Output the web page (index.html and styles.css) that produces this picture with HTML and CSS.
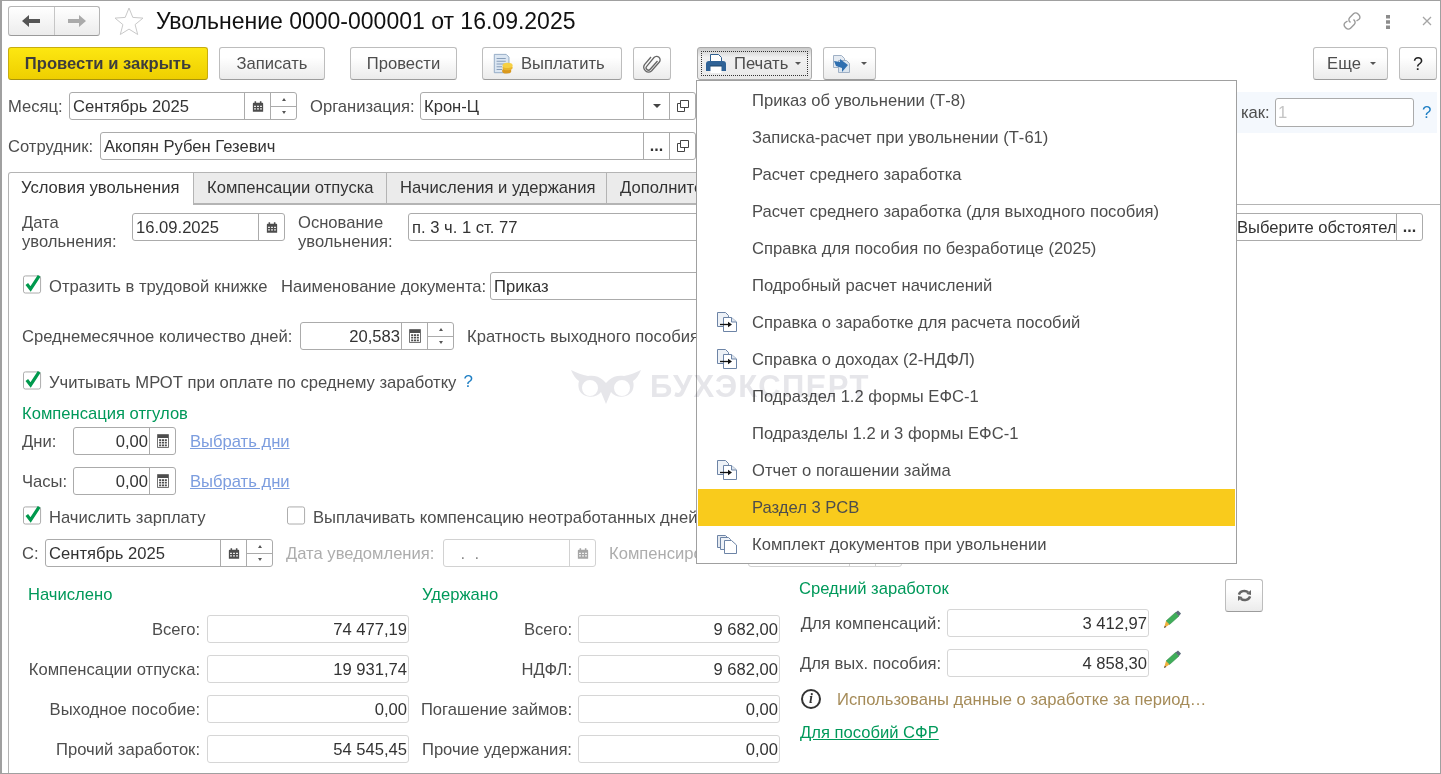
FILE: index.html
```html
<!DOCTYPE html>
<html lang="ru">
<head>
<meta charset="utf-8">
<title>Увольнение</title>
<link rel="stylesheet" href="styles.css">
</head>
<body>
<svg class="defs" width="0" height="0" aria-hidden="true">
  <symbol id="cal" viewBox="0 0 14 14">
    <path d="M1 3.500a1 1 0 0 1 1-1h10a1 1 0 0 1 1 1V13H1z" fill="#4d4d4d"/>
    <path d="M3 .8h1.800v3H3zM9.200.8H11v3H9.200z" fill="#4d4d4d"/>
    <path d="M2.500 6h2v1.600h-2zM6 6h2v1.600H6zM9.500 6h2v1.600h-2zM2.500 9h2v1.600h-2zM6 9h2v1.600H6zM9.500 9h2v1.600h-2z" fill="#fff"/>
  </symbol>
  <symbol id="calc" viewBox="0 0 14 16">
    <path d="M.5.500h13v15H.5z" fill="#fff" stroke="#4d4d4d"/>
    <path d="M1 1h12v3.500H1z" fill="#4d4d4d"/>
    <path d="M2.500 6h2.400v2H2.500zM5.800 6h2.400v2H5.800zM9.100 6h2.400v2H9.100zM2.500 9h2.400v2H2.500zM5.800 9h2.400v2H5.800zM9.100 9h2.400v2H9.100zM2.500 12h2.400v2H2.500zM5.800 12h2.400v2H5.800zM9.100 12h2.400v2H9.100z" fill="#4d4d4d"/>
  </symbol>
  <symbol id="docarrow" viewBox="0 0 20 20">
    <path d="M.5.500h8l3 3v11H.5z" fill="#eef2f7" stroke="#6d84a6"/>
    <path d="M6.500 5.500h8l5 4.500v9.500h-13z" fill="#fff" stroke="#6d84a6"/>
    <path d="M14.500 5.500V10h5" fill="#dfe6ef" stroke="#6d84a6"/>
    <path d="M3 12.500h10" stroke="#111" stroke-width="1.300" fill="none"/>
    <path d="M11 9.800l4 2.700-4 2.700z" fill="#111"/>
  </symbol>
  <symbol id="kit" viewBox="0 0 20 20">
    <path d="M.500 1.500h8l2 2v10H.5z" fill="#e4e9f0" stroke="#6d84a6"/>
    <path d="M3.500 3.500h8l2 2v10h-10z" fill="#eef2f7" stroke="#6d84a6"/>
    <path d="M7.500 6.500h7l5 4.500v8.500h-12z" fill="#fff" stroke="#6d84a6"/>
  </symbol>
  <symbol id="pencil" viewBox="0 0 17 18">
    <path d="M11.500 2.500l3.500 3.500L5.500 14.500 2 11z" fill="#3fae5a" stroke="#2f8a45" stroke-width=".6"/>
    <path d="M11.500 2.500L14 .5l3 3-2 2.500z" fill="#5b6b7a"/>
    <path d="M2 11l3.500 3.500L0 18z" fill="#f0b13c"/>
    <path d="M.9 15.800L0 18l2.300-.9z" fill="#444"/>
  </symbol>
</svg>

<div class="window">
  <header class="titlebar">
    <div class="nav">
      <button class="nav-btn"><svg width="18" height="12" viewBox="0 0 18 12"><path d="M0 6l7-6v4h11v4H7v4z" fill="#555"/></svg></button>
      <button class="nav-btn"><svg width="18" height="12" viewBox="0 0 18 12"><path d="M18 6l-7-6v4H0v4h11v4z" fill="#aaa"/></svg></button>
    </div>
    <svg class="star" width="30" height="28" viewBox="0 0 30 28"><path d="M15 1l3.800 9.400 10.200.7-7.900 6.500 2.600 9.900L15 22.100l-8.700 5.400 2.600-9.900L1 11.100l10.200-.7z" fill="#fff" stroke="#c9c9c9"/></svg>
    <h1 class="title">Увольнение 0000-000001 от 16.09.2025</h1>
    <div class="win-tools">
      <svg class="tool-link" width="20" height="20" viewBox="0 0 20 20"><g fill="none" stroke="#9a9a9a" stroke-width="1.400"><path d="M8.500 11.500l-.7-.7a3 3 0 0 1 0-4.300l3.700-3.700a3 3 0 0 1 4.300 0l1.200 1.200a3 3 0 0 1 0 4.300L14.500 10"/><path d="M11.500 8.500l.7.700a3 3 0 0 1 0 4.300l-3.700 3.700a3 3 0 0 1-4.300 0l-1.200-1.200a3 3 0 0 1 0-4.300L5.500 10"/></g></svg>
      <svg class="tool-dots" width="6" height="14" viewBox="0 0 6 14"><path d="M1 0h4v3.500H1zM1 5.200h4v3.500H1zM1 10.500h4V14H1z" fill="#8c8c8c"/></svg>
      <svg class="tool-close" width="10" height="10" viewBox="0 0 10 10"><path d="M1 1l8 8M9 1l-8 8" stroke="#a5a5a5" stroke-width="1.300"/></svg>
    </div>
  </header>

  <div class="toolbar">
    <button class="btn btn-primary">Провести и закрыть</button>
    <button class="btn btn-save">Записать</button>
    <button class="btn btn-post">Провести</button>
    <button class="btn btn-pay">
      <svg width="22" height="24" viewBox="0 0 24 24"><path d="M2.500 1.500h13l3 3v17h-16z" fill="#dbe6f2" stroke="#8ea6c2"/><path d="M5 6h10M5 9h10M5 12h9M5 15h6M5 18h6" stroke="#7f97b5"/><ellipse cx="16" cy="19.500" rx="5" ry="2.800" fill="#d9981e"/><ellipse cx="17" cy="16" rx="5.500" ry="2.800" fill="#e8b52c"/><ellipse cx="17" cy="13.500" rx="5.500" ry="2.800" fill="#f6d044"/></svg>
      Выплатить
    </button>
    <button class="btn btn-clip">
      <svg width="18" height="20" viewBox="0 0 18 20"><path d="M14.500 7l-7.300 8.300a2.300 2.300 0 0 1-3.500-3L11 3.500a3.500 3.500 0 0 1 5.200 4.700L8.500 17a4.800 4.800 0 0 1-7-6.300L8 3" fill="none" stroke="#666" stroke-width="1.300"/></svg>
    </button>
    <button class="btn btn-print">
      <span class="focus-ring">
        <svg width="20" height="22" viewBox="0 0 20 22"><path d="M4.500 1.500h8l3 3V9h-11z" fill="#fff" stroke="#2f5f8f"/><path d="M0 11a3 3 0 0 1 3-3h14a3 3 0 0 1 3 3v7H0z" fill="#2f6296"/><path d="M4.500 13h11v7h-11z" fill="#fff"/><path d="M4 13h12" stroke="#1e4468"/></svg>
        <span class="print-label">Печать</span>
        <i class="caret"></i>
      </span>
    </button>
    <button class="btn btn-export">
      <svg width="20" height="20" viewBox="0 0 20 20"><path d="M1.500 1.500h8l3 3v9h-11z" fill="#e5ebf2" stroke="#9fb0c5"/><path d="M6.500 6.500h8l3 3v9h-11z" fill="#dbe5ef" stroke="#9fb0c5"/><path d="M2 7l6 1V5l8 6-6 7v-4L4 12z" fill="#2f6fb0"/></svg>
      <i class="caret caret-export"></i>
    </button>
    <button class="btn btn-more">Еще<i class="caret caret-more"></i></button>
    <button class="btn btn-help">?</button>
  </div>

  <div class="head">
    <div class="head-fields">
      <div class="row">
        <label class="lbl w-month">Месяц:</label>
        <div class="field f-month"><span class="val">Сентябрь 2025</span><span class="fbtn"><svg width="12" height="13"><use href="#cal"/></svg></span><span class="spin"><i class="up"></i><i class="down"></i></span></div>
        <label class="lbl w-org">Организация:</label>
        <div class="field f-org"><span class="val">Крон-Ц</span><span class="fbtn"><i class="caret caret-dark"></i></span><span class="fbtn"><svg width="12" height="12" viewBox="0 0 12 12"><path d="M3.500.5h8v7h-8z" fill="none" stroke="#444"/><path d="M3.500 3.500H.5v8h7v-4" fill="none" stroke="#444"/></svg></span></div>
      </div>
      <div class="row row-emp">
        <label class="lbl w-emp">Сотрудник:</label>
        <div class="field f-emp"><span class="val">Акопян Рубен Гезевич</span><span class="fbtn fbtn-dots">...</span><span class="fbtn"><svg width="12" height="12" viewBox="0 0 12 12"><path d="M3.500.5h8v7h-8z" fill="none" stroke="#444"/><path d="M3.500 3.500H.5v8h7v-4" fill="none" stroke="#444"/></svg></span></div>
      </div>
    </div>
    <div class="band">
      <span class="lbl band-lbl">как:</span>
      <div class="field f-band"><span class="val val-muted">1</span></div>
      <span class="q band-q">?</span>
    </div>
  </div>

  <nav class="tabs">
    <div class="tab tab-active t1">Условия увольнения</div>
    <div class="tab t2">Компенсации отпуска</div>
    <div class="tab t3">Начисления и удержания</div>
    <div class="tab t4">Дополнительно</div>
  </nav>

  <section class="panel">
    <div class="row p-r1">
      <label class="lbl lbl-two w-date">Дата увольнения:</label>
      <div class="field f-date"><span class="val">16.09.2025</span><span class="fbtn"><svg width="12" height="13"><use href="#cal"/></svg></span></div>
      <label class="lbl lbl-two w-base">Основание увольнения:</label>
      <div class="field f-base"><span class="val">п. 3 ч. 1 ст. 77</span></div>
      <div class="field f-circ"><span class="val val-clip">Выберите обстоятельство</span><span class="fbtn fbtn-dots">...</span></div>
    </div>

    <div class="row p-r2">
      <span class="check w-chk1"><svg class="cb" width="20" height="22" viewBox="0 0 20 22"><rect x=".5" y="2.500" width="18" height="18" rx="2" fill="#fff" stroke="#a8a8a8"/><path d="M4 11l4 5.200L17 2.500" fill="none" stroke="#00994d" stroke-width="3.400"/></svg>Отразить в трудовой книжке</span>
      <label class="lbl w-docname">Наименование документа:</label>
      <div class="field f-docname"><span class="val">Приказ</span></div>
    </div>

    <div class="row p-r3">
      <label class="lbl w-avg">Среднемесячное количество дней:</label>
      <div class="field f-avg"><span class="val val-num">20,583</span><span class="fbtn"><svg width="12" height="14"><use href="#calc"/></svg></span><span class="spin"><i class="up"></i><i class="down"></i></span></div>
      <label class="lbl w-mult">Кратность выходного пособия:</label>
    </div>

    <div class="row p-r4">
      <span class="check"><svg class="cb" width="20" height="22" viewBox="0 0 20 22"><rect x=".5" y="2.500" width="18" height="18" rx="2" fill="#fff" stroke="#a8a8a8"/><path d="M4 11l4 5.200L17 2.500" fill="none" stroke="#00994d" stroke-width="3.400"/></svg>Учитывать МРОТ при оплате по среднему заработку</span>
      <span class="q q-mrot">?</span>
    </div>

    <div class="group-title p-r5">Компенсация отгулов</div>

    <div class="row p-r6">
      <label class="lbl w-days">Дни:</label>
      <div class="field f-days"><span class="val val-num">0,00</span><span class="fbtn"><svg width="12" height="14"><use href="#calc"/></svg></span></div>
      <a class="link-muted">Выбрать дни</a>
    </div>
    <div class="row p-r7">
      <label class="lbl w-days">Часы:</label>
      <div class="field f-days"><span class="val val-num">0,00</span><span class="fbtn"><svg width="12" height="14"><use href="#calc"/></svg></span></div>
      <a class="link-muted">Выбрать дни</a>
    </div>

    <div class="row p-r8">
      <span class="check w-chk3"><svg class="cb" width="20" height="22" viewBox="0 0 20 22"><rect x=".5" y="2.500" width="18" height="18" rx="2" fill="#fff" stroke="#a8a8a8"/><path d="M4 11l4 5.200L17 2.500" fill="none" stroke="#00994d" stroke-width="3.400"/></svg>Начислить зарплату</span>
      <span class="check check-plain"><svg class="cb" width="20" height="22" viewBox="0 0 20 22"><rect x=".5" y="2.500" width="18" height="18" rx="2" fill="#fff" stroke="#a8a8a8"/></svg>Выплачивать компенсацию неотработанных дней</span>
    </div>

    <div class="row p-r9">
      <label class="lbl w-from">С:</label>
      <div class="field f-month"><span class="val">Сентябрь 2025</span><span class="fbtn"><svg width="12" height="13"><use href="#cal"/></svg></span><span class="spin"><i class="up"></i><i class="down"></i></span></div>
      <label class="lbl lbl-off w-notice">Дата уведомления:</label>
      <div class="field field-off f-date"><span class="val val-dots">&nbsp;.&nbsp;&nbsp;.</span><span class="fbtn"><svg class="icon-off" width="12" height="13"><use href="#cal"/></svg></span></div>
      <label class="lbl lbl-off w-comp">Компенсировать:</label>
      <div class="field field-off f-comp"><span class="val"></span><span class="fbtn"></span><span class="fbtn"></span></div>
    </div>

    <div class="totals">
      <div class="col col-a">
        <div class="group-title col-title">Начислено</div>
        <div class="sum"><label class="lbl sum-lbl-a">Всего:</label><div class="field field-ro f-sum"><span class="val val-num">74 477,19</span></div></div>
        <div class="sum"><label class="lbl sum-lbl-a">Компенсации отпуска:</label><div class="field field-ro f-sum"><span class="val val-num">19 931,74</span></div></div>
        <div class="sum"><label class="lbl sum-lbl-a">Выходное пособие:</label><div class="field field-ro f-sum"><span class="val val-num">0,00</span></div></div>
        <div class="sum"><label class="lbl sum-lbl-a">Прочий заработок:</label><div class="field field-ro f-sum"><span class="val val-num">54 545,45</span></div></div>
      </div>
      <div class="col col-b">
        <div class="group-title col-title col-title-b">Удержано</div>
        <div class="sum"><label class="lbl sum-lbl-b">Всего:</label><div class="field field-ro f-sum"><span class="val val-num">9 682,00</span></div></div>
        <div class="sum"><label class="lbl sum-lbl-b">НДФЛ:</label><div class="field field-ro f-sum"><span class="val val-num">9 682,00</span></div></div>
        <div class="sum"><label class="lbl sum-lbl-b">Погашение займов:</label><div class="field field-ro f-sum"><span class="val val-num">0,00</span></div></div>
        <div class="sum"><label class="lbl sum-lbl-b">Прочие удержания:</label><div class="field field-ro f-sum"><span class="val val-num">0,00</span></div></div>
      </div>
      <div class="col col-c">
        <div class="group-title col-title-c">Средний заработок</div>
        <div class="sum"><label class="lbl sum-lbl-c">Для компенсаций:</label><div class="field field-ro f-sum"><span class="val val-num">3 412,97</span></div><svg class="pencil" width="17" height="18"><use href="#pencil"/></svg></div>
        <div class="sum"><label class="lbl sum-lbl-c">Для вых. пособия:</label><div class="field field-ro f-sum"><span class="val val-num">4 858,30</span></div><svg class="pencil" width="17" height="18"><use href="#pencil"/></svg></div>
        <div class="info"><span class="info-ic">i</span><span class="info-txt">Использованы данные о заработке за период…</span></div>
        <a class="link-green">Для пособий СФР</a>
      </div>
      <button class="btn btn-refresh"><svg width="15" height="13" viewBox="0 0 16 14"><g fill="none" stroke="#666" stroke-width="2.600"><path d="M2 6a6 5 0 0 1 10-2.500"/><path d="M14 8a6 5 0 0 1-10 2.500"/></g><path d="M10 5.500L15 6.500V1zM6 8.500L1 7.500V13z" fill="#666"/></svg></button>
    </div>
  </section>

  <ul class="menu">
    <li class="mi">Приказ об увольнении (Т-8)</li>
    <li class="mi">Записка-расчет при увольнении (Т-61)</li>
    <li class="mi">Расчет среднего заработка</li>
    <li class="mi">Расчет среднего заработка (для выходного пособия)</li>
    <li class="mi">Справка для пособия по безработице (2025)</li>
    <li class="mi">Подробный расчет начислений</li>
    <li class="mi"><svg class="mi-ic" width="20" height="20"><use href="#docarrow"/></svg>Справка о заработке для расчета пособий</li>
    <li class="mi"><svg class="mi-ic" width="20" height="20"><use href="#docarrow"/></svg>Справка о доходах (2-НДФЛ)</li>
    <li class="mi">Подраздел 1.2 формы ЕФС-1</li>
    <li class="mi">Подразделы 1.2 и 3 формы ЕФС-1</li>
    <li class="mi"><svg class="mi-ic" width="20" height="20"><use href="#docarrow"/></svg>Отчет о погашении займа</li>
    <li class="mi mi-active">Раздел 3 РСВ</li>
    <li class="mi"><svg class="mi-ic" width="20" height="20"><use href="#kit"/></svg>Комплект документов при увольнении</li>
  </ul>

  <div class="watermark">
    <svg width="70" height="34" viewBox="0 0 70 34"><path fill="#e6e6ea" fill-rule="evenodd" d="M0 0c6 3 11 5 17 6 5-1 11 0 15 4l3 3 3-3c4-4 10-5 15-4 6-1 11-3 17-6-2 5-5 9-8 11 2 7-1 13-7 15-6 2-12 0-15-4l-5 12-5-12c-3 4-9 6-15 4C9 24 6 18 8 11 5 9 2 5 0 0zM19 10a8 8 0 1 0 0 16 8 8 0 0 0 0-16zM51 10a8 8 0 1 0 0 16 8 8 0 0 0 0-16z"/></svg>
    <span class="wm-text">БУХЭКСПЕРТ</span>
  </div>
</div>
</body>
</html>
```
FILE: styles.css
```css
* { box-sizing: border-box; }
html, body { margin: 0; padding: 0; }
body { width: 1441px; height: 774px; overflow: hidden; background: #fff; font: 16.6px/20px "Liberation Sans", Arial, sans-serif; color: #333; }
.defs { position: absolute; }
button { font: inherit; margin: 0; padding: 0; }
ul { margin: 0; padding: 0; list-style: none; }

.window { position: relative; width: 1441px; height: 774px; border: 1px solid #a0a0a0; border-left-width: 2px; border-bottom-width: 1px; padding-left: 6px; display: flex; flex-direction: column; overflow: hidden; background: #fff; }

/* title bar */
.titlebar { display: flex; align-items: flex-start; height: 46px; }
.nav { display: flex; margin-top: 5px; width: 92px; height: 30px; border: 1px solid #b5b5b5; border-bottom-color: #9a9a9a; border-radius: 3px; background: linear-gradient(#fff, #ececec); }
.nav-btn { flex: 1; border: 0; background: none; display: flex; align-items: center; justify-content: center; }
.nav-btn + .nav-btn { border-left: 1px solid #c6c6c6; }
.star { margin: 6px 0 0 14px; }
.title { margin: 6px 0 0 12px; font-size: 23px; line-height: 28px; font-weight: 400; color: #111; }
.win-tools { margin-left: auto; height: 40px; display: flex; align-items: flex-start; padding-right: 8px; }
.tool-link { margin-top: 10px; }
.tool-dots { margin: 14px 0 0 23px; }
.tool-close { margin: 15px 0 0 31px; }

/* toolbar */
.toolbar { display: flex; height: 33px; position: relative; }
.btn { height: 33px; border: 1px solid #bdbdbd; border-bottom-color: #9c9c9c; border-radius: 3px; background: linear-gradient(#fff 30%, #ebebeb); color: #4d4d4d; display: flex; align-items: center; justify-content: center; white-space: nowrap; flex: none; }
.btn-primary { width: 200px; background: linear-gradient(#fde711, #eecf00); border-color: #c7ad10; border-bottom-color: #a8930c; color: #3d3d3d; font-weight: 700; }
.btn-save { width: 106px; margin-left: 11px; }
.btn-post { width: 107px; margin-left: 25px; }
.btn-pay { width: 140px; margin-left: 25px; gap: 7px; justify-content: flex-start; padding-left: 9px; }
.btn-clip { width: 38px; margin-left: 11px; }
.btn-print { width: 115px; margin-left: 26px; padding: 3px; background: linear-gradient(#c9c9c9, #f1f1f1 30%, #e8e8e8); border-color: #aaa; }
.focus-ring { flex: 1; height: 100%; border: 1px dotted #333; display: flex; align-items: center; padding-left: 4px; }
.print-label { margin-left: 8px; }
.btn-export { width: 53px; margin-left: 11px; gap: 9px; }
.btn-more { width: 75px; margin-left: auto; padding-left: 2px; }
.btn-help { width: 38px; margin: 0 3px 0 11px; color: #222; font-size: 18px; }
.caret { display: inline-block; width: 0; height: 0; border: 3px solid transparent; border-top: 3px solid #555; border-bottom: 0; }
.focus-ring .caret { margin-left: 7px; }
.caret-more { margin-left: 9px; }
.caret-dark { border-width: 4px 4px 0; border-top-color: #444; }

/* head fields */
.head { display: flex; margin-top: 12px; height: 68px; padding-right: 3px; justify-content: space-between; align-items: flex-start; }
.row { display: flex; align-items: center; height: 28px; flex: none; }
.row-emp { margin-top: 12px; }
.lbl { color: #4d4d4d; white-space: nowrap; flex: none; padding-top: 1px; }
.w-month { width: 61px; }
.w-org { width: 110px; margin-left: 13px; }
.w-emp { width: 92px; }
.field { display: flex; height: 28px; border: 1px solid #ababab; border-radius: 3px; background: #fff; flex: none; overflow: hidden; align-items: stretch; }
.val { flex: 1; min-width: 0; padding: 0 3px; line-height: 27px; color: #333; white-space: nowrap; overflow: hidden; }
.val-num { text-align: right; padding-right: 1px; }
.val-muted { color: #c4c4c4; padding: 0 2px; }
.fbtn { width: 26px; flex: none; border-left: 1px solid #ababab; display: flex; align-items: center; justify-content: center; color: #333; }
.fbtn-dots { align-items: flex-start; line-height: 26px; font-weight: 700; font-size: 16px; }
.spin { width: 26px; flex: none; border-left: 1px solid #ababab; display: flex; flex-direction: column; }
.spin i { flex: 1; display: flex; align-items: center; justify-content: center; position: relative; }
.spin i + i { border-top: 1px solid #ababab; }
.up::before { content: ""; border: 2.500px solid transparent; border-bottom: 3px solid #555; border-top: 0; }
.down::before { content: ""; border: 2.500px solid transparent; border-top: 3px solid #555; border-bottom: 0; }
.f-month { width: 228px; }
.f-org { width: 276px; }
.f-emp { width: 596px; }
.band { width: 200px; height: 41px; background: #f4f8fd; display: flex; align-items: center; padding: 0 0 0 4px; }
.band-lbl { width: 34px; }
.f-band { width: 139px; height: 29px; }
.q { color: #1f7fc4; font-weight: 400; font-size: 17px; }
.band-q { margin-left: 8px; }

/* tabs */
.tabs { display: flex; margin-top: 12px; height: 32px; flex: none; position: relative; z-index: 1; }
.tab { height: 32px; border: 1px solid #b4b4b4; border-left: 0; border-bottom-color: #b4b4b4; background: #ebebeb; color: #333; line-height: 30px; padding-left: 13px; white-space: nowrap; flex: none; }
.tab-active { height: 33px; background: #fff; border-left: 1px solid #b4b4b4; border-bottom: 0; border-radius: 3px 0 0 0; padding-left: 12px; }
.t1 { width: 186px; }
.t2 { width: 193px; }
.t3 { width: 220px; }
.t4 { width: 200px; }

/* panel */
.panel { flex: 1; border: 1px solid #b4b4b4; border-width: 1px 0 0 1px; padding: 8px 17px 0 13px; min-height: 0; }
.p-r1 { align-items: flex-start; }
.lbl-two { white-space: normal; line-height: 19px; padding-top: 0; }
.w-date { width: 110px; }
.f-date { width: 153px; }
.w-base { width: 110px; margin-left: 13px; }
.f-base { width: 320px; }
.f-circ { width: 191px; margin-left: auto; }
.val-clip { padding-left: 4px; }
.p-r2 { margin-top: 31px; }
.check { display: flex; align-items: center; color: #4d4d4d; white-space: nowrap; padding-left: 1px; flex: none; padding-top: 1px; }
.cb { margin: -5px 7px 0 0; flex: none; width: 19px; }
.w-chk1 { width: 259px; }
.w-docname { width: 209px; }
.f-docname { width: 320px; }
.p-r3 { margin-top: 22px; }
.w-avg { width: 278px; }
.f-avg { width: 154px; }
.w-mult { margin-left: 13px; }
.p-r4 { margin-top: 22px; height: 20px; }
.q-mrot { margin-left: 7px; }
.group-title { color: #00995a; white-space: nowrap; padding-top: 1px; }
.p-r5 { margin-top: 11px; height: 20px; }
.p-r6 { margin-top: 4px; }
.p-r7 { margin-top: 12px; }
.w-days { width: 51px; }
.f-days { width: 103px; }
.link-muted { margin-left: 14px; color: #7c9ddf; text-decoration: underline; padding-top: 1px; }
.p-r8 { margin-top: 12px; height: 20px; }
.w-chk3 { width: 264px; }
.p-r9 { margin-top: 12px; }
.w-from { width: 23px; }
.lbl-off { color: #adadad; }
.w-notice { width: 157px; margin-left: 13px; }
.w-comp { width: 139px; margin-left: 13px; overflow: hidden; }
.field-off { border-color: #d2d2d2; }
.field-off .fbtn { border-color: #d2d2d2; }
.val-dots { padding-left: 12px; color: #888; }
.icon-off { opacity: .5; }
.f-comp { width: 154px; }

/* totals */
.totals { display: flex; margin-top: 12px; align-items: flex-start; }
.col { flex: none; }
.col-a { width: 393px; padding-top: 5px; }
.col-b { width: 384px; padding-top: 5px; }
.col-title { margin-left: 6px; margin-bottom: 11px; height: 20px; }
.col-title-b { margin-left: 7px; }
.sum { display: flex; align-items: center; height: 28px; margin-bottom: 12px; }
.sum-lbl-a { width: 178px; text-align: right; margin-right: 7px; }
.sum-lbl-b { width: 157px; text-align: right; margin-right: 6px; }
.sum-lbl-c { width: 142px; text-align: right; margin-right: 6px; }
.col-c { width: 426px; }
.col-title-c { line-height: 18px; margin-bottom: 11px; height: 19px; }
.field-ro { border-color: #d6d6d6; }
.f-sum { width: 202px; }
.pencil { margin: -9px 0 0 15px; }
.info { display: flex; align-items: center; height: 20px; margin-top: 1px; padding-left: 2px; }
.info-ic { width: 20px; height: 20px; border: 2px solid #333; border-radius: 50%; font: italic 700 14px/16px "Liberation Serif", serif; text-align: center; color: #333; flex: none; }
.info-txt { margin-left: 16px; color: #a58b58; white-space: nowrap; padding-top: 1px; }
.link-green { display: block; margin-top: 13px; margin-left: 1px; color: #00995a; text-decoration: underline; padding-top: 1px; }
.btn-refresh { width: 38px; }

/* menu */
.menu { position: absolute; left: 694px; top: 79px; width: 541px; height: 484px; background: #fff; border: 1px solid #a0a0a0; padding: 1px; z-index: 3; }
.mi { position: relative; height: 37px; line-height: 37px; padding-left: 54px; color: #4d4d4d; white-space: nowrap; }
.mi-active { background: #f9cb1c; }
.mi-ic { position: absolute; left: 19px; top: 8px; }

/* watermark */
.watermark { position: absolute; left: 569px; top: 369px; display: flex; align-items: center; gap: 9px; z-index: 4; pointer-events: none; mix-blend-mode: multiply; }
.wm-text { font-size: 31px; line-height: 34px; font-weight: 700; color: #e6e6ea; letter-spacing: 1.4px; }
```
